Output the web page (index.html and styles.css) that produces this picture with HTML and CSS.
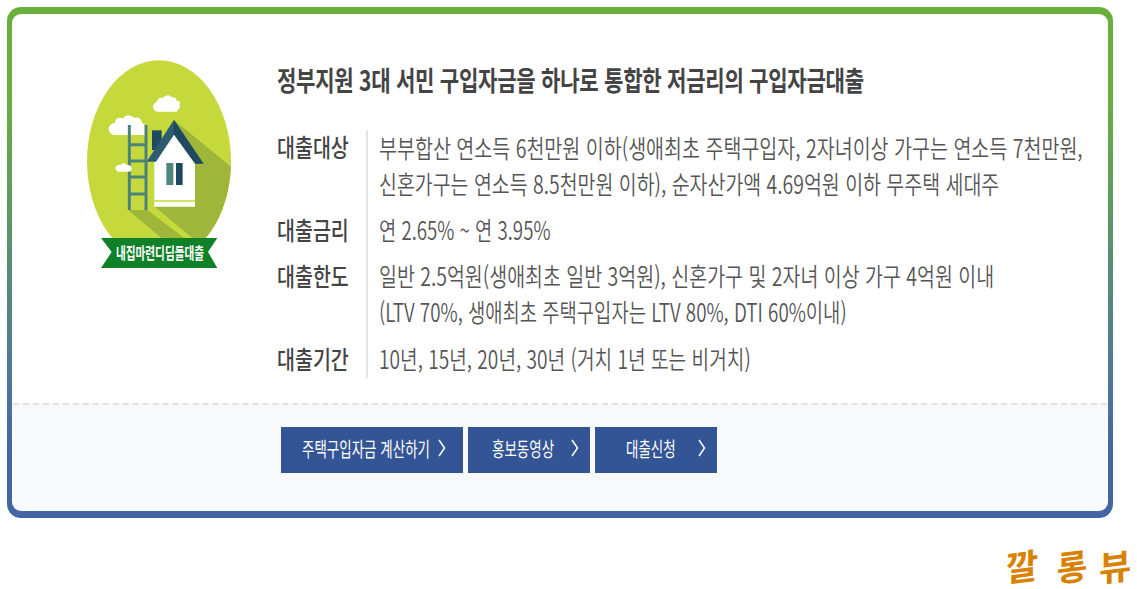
FILE: index.html
```html
<!DOCTYPE html>
<html lang="ko">
<head>
    <meta charset="UTF-8">
    <meta name="viewport" content="width=device-width, initial-scale=1.0">
    <title>내집마련디딤돌대출</title>
    <link rel="stylesheet" href="styles.css">
</head>
<body>
    <div class="card">
        <div class="inner">
            <div class="summary">
                <svg class="emblem" viewBox="45 30 441 630" width="147" height="210">
                    <defs>
                        <clipPath id="oval"><ellipse cx="267" cy="334" rx="216" ry="303"/></clipPath>
                    </defs>
                    <ellipse cx="267" cy="334" rx="216" ry="303" fill="#c6d93c"/>
                    <g clip-path="url(#oval)">
                        <path d="M312 210L500 364V640H460L254 470Z" fill="#9eb63a"/>
                        <path d="M174 480H232L370 585H300Z" fill="#9eb63a"/>
                    </g>
                    <path d="M136 255a18 17 0 0 1-2-36q4-20 25-14q15-18 33-2q20-4 24 15q16 8 10 37Z" fill="#fff"/>
                    <path d="M262 185q-14-4-13-18q7-10 12-13q5-14 18-10q13-16 27-2q14-2 14 11l9 0v20l-9 12Z" fill="#fff"/>
                    <g fill="none" stroke="#4a837a" stroke-width="9">
                        <path d="M178 225V480M228 225V480M178 284H228M178 333H228M178 381H228M178 432H228"/>
                    </g>
                    <path d="M143 365q-9-7-6-15q8-7 14-5q8-10 18-1q14-1 16 12q-1 9-9 9Z" fill="#fff"/>
                    <path d="M246 241H275V300H246Z" fill="#1d4a5f"/>
                    <path d="M312 246L375 330V470H253V330Z" fill="#fff"/>
                    <path d="M253 453H375" stroke="#c6d93c" stroke-width="4"/>
                    <path d="M312 209V254L258 335H230Z" fill="#2c5c70"/>
                    <path d="M312 209L401 341H375L312 254Z" fill="#1d4a5f"/>
                    <path d="M289 339H310V405H289Z" fill="#4f857a"/>
                    <path d="M318 339H338V405H318Z" fill="#1d4a5f"/>
                    <path d="M93 564H442L414 606L442 654H93L125 606Z" fill="#108129"/>
                    <text class="ribbon-text" x="138" y="628" textLength="264" lengthAdjust="spacingAndGlyphs">내집마련디딤돌대출</text>
                </svg>
                <div class="content">
                    <h1><span class="line title">정부지원 3대 서민 구입자금을 하나로 통합한 저금리의 구입자금대출</span></h1>
                    <dl>
                        <dt><span class="line">대출대상</span></dt>
                        <dd>
                            <span class="line target-1">부부합산 연소득 6천만원 이하(생애최초 주택구입자, 2자녀이상 가구는 연소득 7천만원,</span>
                            <span class="line target-2">신혼가구는 연소득 8.5천만원 이하), 순자산가액 4.69억원 이하 무주택 세대주</span>
                        </dd>
                        <dt><span class="line">대출금리</span></dt>
                        <dd><span class="line rate">연 2.65% ~ 연 3.95%</span></dd>
                        <dt><span class="line">대출한도</span></dt>
                        <dd>
                            <span class="line limit-1">일반 2.5억원(생애최초 일반 3억원), 신혼가구 및 2자녀 이상 가구 4억원 이내</span>
                            <span class="line limit-2">(LTV 70%, 생애최초 주택구입자는 LTV 80%, DTI 60%이내)</span>
                        </dd>
                        <dt><span class="line">대출기간</span></dt>
                        <dd><span class="line period">10년, 15년, 20년, 30년 (거치 1년 또는 비거치)</span></dd>
                    </dl>
                </div>
            </div>
            <div class="actions">
                <a class="btn btn-calc"><span class="line">주택구입자금 계산하기</span><svg width="8" height="18" viewBox="0 0 8 18"><path d="M1 1L6.5 9L1 17"/></svg></a>
                <a class="btn btn-video"><span class="line">홍보동영상</span><svg width="8" height="18" viewBox="0 0 8 18"><path d="M1 1L6.5 9L1 17"/></svg></a>
                <a class="btn btn-apply"><span class="line">대출신청</span><svg width="8" height="18" viewBox="0 0 8 18"><path d="M1 1L6.5 9L1 17"/></svg></a>
            </div>
        </div>
    </div>
    <div class="signature"><span>깔</span><span>롱</span><span>뷰</span></div>
</body>
</html>
```
FILE: styles.css
```css
* {
    box-sizing: border-box;
}
body {
    margin: 0;
    padding: 7px 0 0 7px;
    width: 1137px;
    height: 589px;
    overflow: hidden;
    background-color: #fff;
    font-family: "Noto Sans CJK KR", sans-serif;
    color: #555;
}
.card {
    width: 1106px;
    height: 511px;
    padding: 7px 5px;
    border-radius: 14px;
    background: linear-gradient(#69b13c 0%, #69ae42 18%, #4f7896 72%, #4465a4 88%);
}
.inner {
    display: flex;
    flex-direction: column;
    height: 100%;
    border-radius: 9px;
    background-color: #fff;
    padding: 0 1px 2px;
}
.summary {
    display: flex;
    height: 389px;
    padding: 46px 0 0 72px;
}
.emblem {
    flex: none;
}
.ribbon-text {
    font-size: 47px;
    font-weight: 700;
    fill: #fff;
}
.content {
    margin-left: 45px;
}
.line {
    display: block;
    width: max-content;
    white-space: nowrap;
    transform-origin: 0 50%;
    transform: translateY(-2px) scaleX(0.78);
}
.title {
    transform: translateY(0) scaleX(0.768);
}
.target-1 {
    transform: translateY(-1px) scaleX(0.781);
}
.target-2 {
    transform: translateY(-1px) scaleX(0.778);
}
.rate {
    transform: translateY(-2px) scaleX(0.748);
}
.limit-1 {
    transform: translateY(-2px) scaleX(0.779);
}
.limit-2 {
    transform: translateY(-2px) scaleX(0.751);
}
.period {
    transform: translateY(-2px) scaleX(0.766);
}
h1 {
    margin: 0;
    height: 70px;
    font-size: 27.5px;
    line-height: 38px;
    font-weight: 700;
    letter-spacing: -0.4px;
    color: #444;
}
dl {
    display: grid;
    grid-template-columns: 89px 720px;
    margin: 0;
    font-size: 25px;
    line-height: 36px;
}
dt {
    font-weight: 500;
    color: #444;
    padding-bottom: 10.5px;
}
dd {
    margin: 0;
    padding: 0 0 10.5px 11px;
    border-left: 2px solid #e3e3e3;
    font-weight: 350;
}
dt:last-of-type, dd:last-of-type {
    padding-bottom: 0;
}
.actions {
    display: flex;
    flex: 1;
    align-items: flex-start;
    gap: 5px;
    padding: 22px 0 0 268px;
    background-color: #f8f9fb;
    border-top: 2px dashed #dfe2e5;
    border-radius: 0 0 7px 7px;
}
.btn {
    display: flex;
    align-items: center;
    width: 122px;
    height: 46px;
    background-color: #345595;
    color: #fff;
    font-size: 20px;
}
.btn .line {
    width: 0;
    transform: translateY(-2px) scaleX(0.675);
}
.btn svg {
    margin-left: auto;
    margin-right: 11px;
    fill: none;
    stroke: #fff;
    stroke-width: 1.5;
    transform: translateY(-2px);
}
.btn-calc {
    width: 182px;
    padding-left: 21px;
}
.btn-calc svg {
    margin-right: 17px;
}
.btn-video {
    padding-left: 24px;
}
.btn-apply {
    padding-left: 31px;
}
.signature {
    display: flex;
    justify-content: flex-end;
    gap: 14px;
    padding: 22px 6px 0 0;
    font-size: 35px;
    line-height: 50px;
    font-weight: 700;
    color: #d98200;
}
.signature span {
    transform: skewY(-7deg);
}
.signature span:nth-child(2) {
    transform: translateX(3px) skewY(-7deg) scaleX(0.95);
}
```
